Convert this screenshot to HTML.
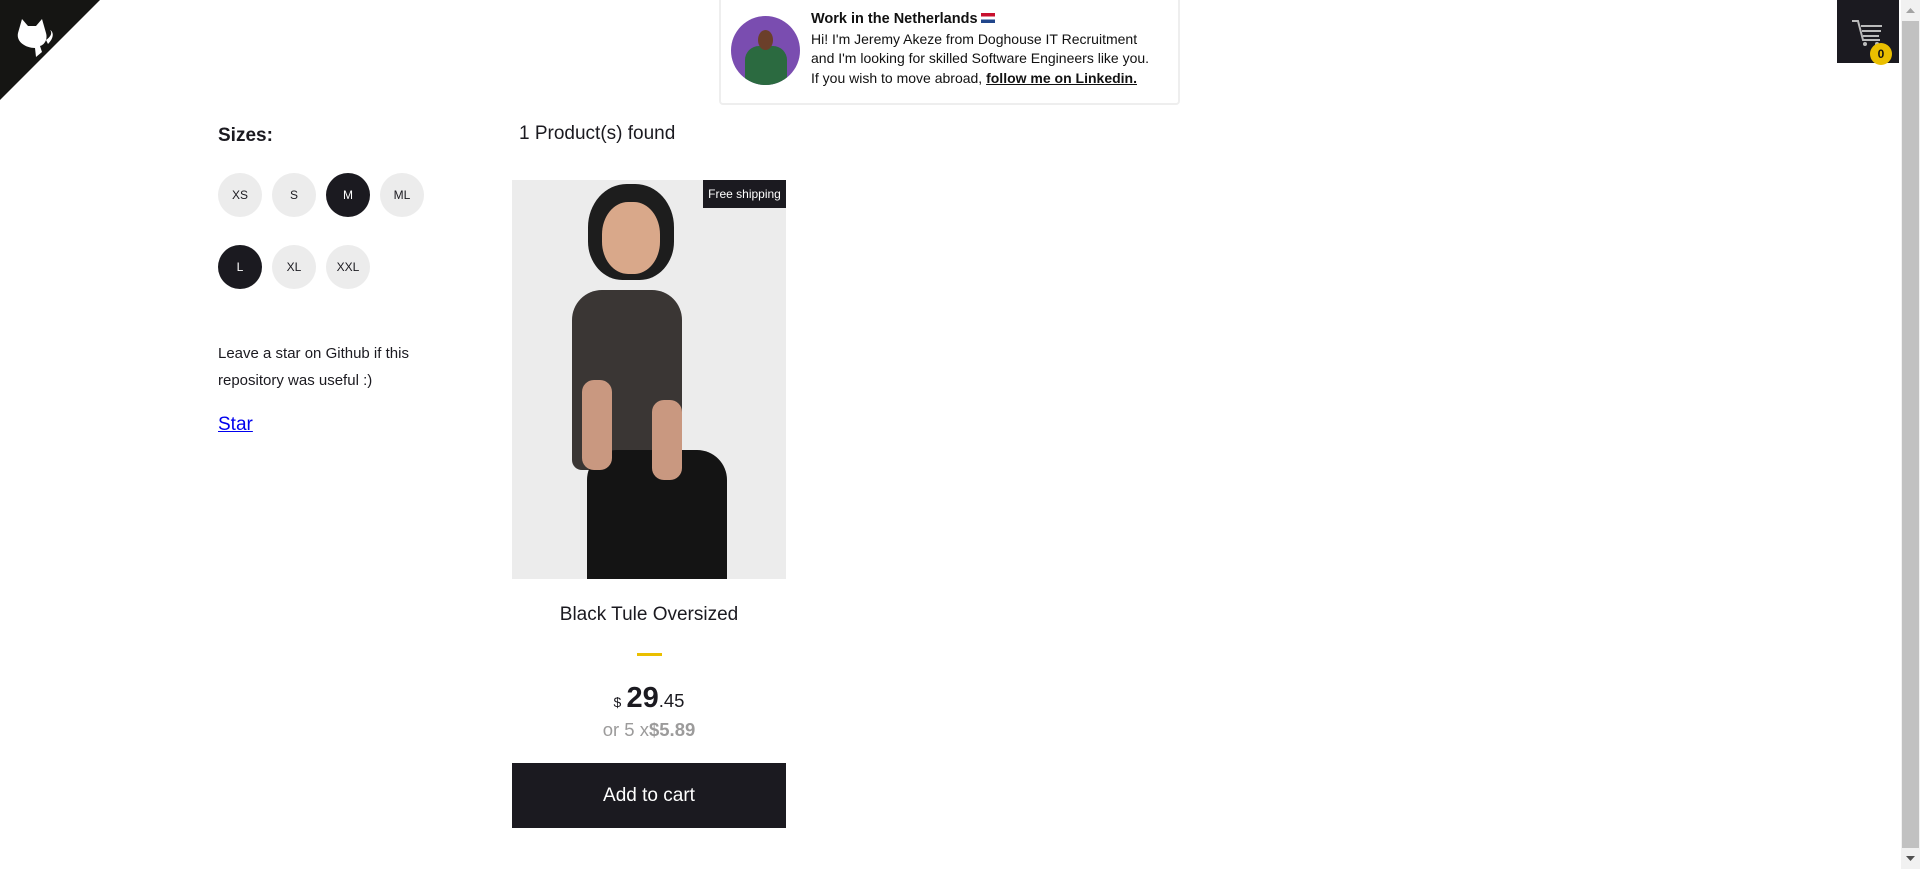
<!DOCTYPE html>
<html><head><meta charset="utf-8"><style>
*{box-sizing:border-box;margin:0;padding:0}
body{width:1920px;height:869px;overflow:hidden;background:#fff;font-family:"Liberation Sans",sans-serif;color:#1b1a20;position:relative}
.abs{position:absolute}
.sz{position:absolute;width:44px;height:44px;border-radius:50%;background:#ececec;color:#1b1a20;font-size:12px;display:flex;align-items:center;justify-content:center}
.sz.on{background:#1b1a20;color:#fff}
</style></head><body>
<svg class="abs" style="left:0;top:0" width="100" height="100"><polygon points="0,0 100,0 0,100" fill="#151513"/>
<path d="M18 33 L22 19 L28 26 L36 26 L42 19 L46 33 C48 40 44 45 40 46 L42 52 L36 57 L35 48 C26 48 16 42 18 33 Z M46 40 C52 36 52 32 50 30 C54 32 54 38 48 44 Z" fill="#fff"/></svg>

<div class="abs" style="left:719px;top:-4px;width:461px;height:109px;border:2px solid #eee;border-radius:4px;background:#fff"></div>
<div class="abs" style="left:731px;top:16px;width:69px;height:69px;border-radius:50%;background:#7a4db0;overflow:hidden">
<div class="abs" style="left:14px;top:30px;width:42px;height:45px;border-radius:14px 14px 0 0;background:#2b6a40"></div>
<div class="abs" style="left:27px;top:14px;width:15px;height:20px;border-radius:50%;background:#6b3f2a"></div></div>
<div class="abs" style="left:811px;top:9px;font-size:14px;line-height:19.7px;width:370px;color:#111">
<b style="font-size:14.5px">Work in the Netherlands</b> <span style="display:inline-block;width:14px;height:10px;background:linear-gradient(#c8102e 33%,#fff 33% 66%,#21468b 66%);vertical-align:0"></span><br>
Hi! I'm Jeremy Akeze from Doghouse IT Recruitment<br>and I'm looking for skilled Software Engineers like you.<br>If you wish to move abroad, <b style="text-decoration:underline">follow me on Linkedin.</b></div>

<div class="abs" style="left:1837px;top:0;width:62px;height:63px;background:#1b1a20"></div>
<svg class="abs" style="left:1850px;top:18px" width="40" height="30"><path d="M2 3 H8 L13 22 H30" stroke="#bbb" stroke-width="2" fill="none"/><path d="M11 8H32M12 13H31M13 18H29" stroke="#bbb" stroke-width="2"/><circle cx="15" cy="26" r="2" fill="#bbb"/><circle cx="27" cy="26" r="2" fill="#bbb"/></svg>
<div class="abs" style="left:1870px;top:43px;width:22px;height:22px;border-radius:50%;background:#eabf00;font-size:12px;font-weight:bold;display:flex;align-items:center;justify-content:center;color:#111">0</div>

<div class="abs" style="left:1901px;top:0;width:19px;height:869px;background:#f1f1f1"></div>
<div class="abs" style="left:1902px;top:21px;width:17px;height:827px;background:#c1c1c1"></div>
<svg class="abs" style="left:1901px;top:0" width="19" height="869"><path d="M5 13 L9.5 8 L14 13Z" fill="#a3a3a3"/><path d="M5 856 L9.5 861 L14 856Z" fill="#505050"/></svg>

<div class="abs" style="left:218px;top:125px;font-size:19px;font-weight:bold">Sizes:</div>
<div class="sz" style="left:218px;top:173px">XS</div>
<div class="sz" style="left:272px;top:173px">S</div>
<div class="sz on" style="left:326px;top:173px">M</div>
<div class="sz" style="left:380px;top:173px">ML</div>
<div class="sz on" style="left:218px;top:245px">L</div>
<div class="sz" style="left:272px;top:245px">XL</div>
<div class="sz" style="left:326px;top:245px">XXL</div>
<div class="abs" style="left:218px;top:340px;font-size:15px;line-height:27px;width:230px">Leave a star on Github if this repository was useful :)</div>
<a class="abs" style="left:218px;top:414px;font-size:19px;color:#00e;text-decoration:underline">Star</a>

<div class="abs" style="left:519px;top:123px;font-size:19px">1 Product(s) found</div>
<div class="abs" style="left:512px;top:180px;width:274px;height:399px;background:#ececec;overflow:hidden">
<div class="abs" style="left:76px;top:4px;width:86px;height:96px;border-radius:45% 45% 40% 40%;background:#1d1d1d"></div>
<div class="abs" style="left:90px;top:22px;width:58px;height:72px;border-radius:45%;background:#d9a88a"></div>
<div class="abs" style="left:60px;top:110px;width:110px;height:180px;border-radius:30px 30px 10px 10px;background:#3a3634"></div>
<div class="abs" style="left:75px;top:270px;width:140px;height:130px;border-radius:30px 30px 0 0;background:#141414"></div>
<div class="abs" style="left:70px;top:200px;width:30px;height:90px;background:#c99880;border-radius:12px"></div>
<div class="abs" style="left:140px;top:220px;width:30px;height:80px;background:#c99880;border-radius:12px"></div>
</div>
<div class="abs" style="left:703px;top:180px;width:83px;height:28px;background:#1b1a20;color:#fff;font-size:12px;display:flex;align-items:center;justify-content:center">Free shipping</div>
<div class="abs" style="left:512px;top:604px;width:274px;text-align:center;font-size:19px">Black Tule Oversized</div>
<div class="abs" style="left:637px;top:653px;width:25px;height:3px;background:#eabf00"></div>
<div class="abs" style="left:512px;top:682px;width:274px;text-align:center;font-size:18.5px"><span style="font-size:14px">$</span> <b style="font-size:29px">29</b>.45</div>
<div class="abs" style="left:512px;top:719px;width:274px;text-align:center;font-size:18.5px;color:#9c9b9b">or 5 x<b>$5.89</b></div>
<div class="abs" style="left:512px;top:763px;width:274px;height:65px;background:#1b1a20;color:#fff;font-size:19px;display:flex;align-items:center;justify-content:center">Add to cart</div>
</body></html>
